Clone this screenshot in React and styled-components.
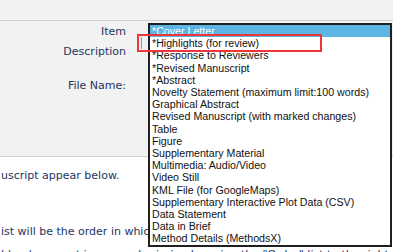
import * as React from 'react'
import styled, { createGlobalStyle } from 'styled-components'

const Global = createGlobalStyle`
  html, body {
    margin: 0;
    padding: 0;
    background: #fff;
    overflow: hidden;
  }
  body {
    width: 393px;
    height: 252px;
  }
`

const Page = styled.div`
  position: relative;
  width: 393px;
  height: 252px;
  overflow: hidden;
  display: flex;
  flex-direction: column;
  font-family: "DejaVu Sans", Verdana, sans-serif;
  color: #1d3562;
`

const TopBar = styled.div`
  height: 20px;
  background: #f2f2f2;
  border-bottom: 1px solid #cfcfcf;
  flex: none;
`

const FormArea = styled.div`
  height: 131px;
  background: #f2f2f2;
  border-bottom: 1px solid #d2d2d2;
  flex: none;
  display: grid;
  grid-template-columns: 126px 1fr;
  align-content: start;
  padding-top: 4px;
`

const Label = styled.div`
  grid-column: 1;
  text-align: right;
  font-size: 11px;
  line-height: 14px;
  margin-top: ${p => p.$gap || 0}px;
  white-space: nowrap;
`

const Body = styled.div`
  flex: 1;
  background: #fff;
  padding-top: 12px;
`

const Line = styled.p`
  margin: ${p => p.$gap || 0}px 0 0 1px;
  font-size: 11px;
  line-height: 14px;
  white-space: nowrap;
`

const ListBox = styled.ul`
  position: absolute;
  left: 148px;
  top: 23px;
  width: 244px;
  height: 224px;
  box-sizing: border-box;
  margin: 0;
  padding: 0;
  list-style: none;
  background: #fff;
  border: 2px solid #1f1f1f;
  font-family: "Liberation Sans", Arial, sans-serif;
  font-size: 10.65px;
  line-height: 12.2px;
  color: #111;
  overflow: hidden;
`

const Option = styled.li`
  padding-left: 2px;
  white-space: nowrap;
  background: ${p => (p.$selected ? '#5cb5e3' : 'transparent')};
  color: ${p => (p.$selected ? '#fff' : '#111')};
`

const Mark = styled.div`
  position: absolute;
  left: 137px;
  top: 34px;
  width: 185px;
  height: 18px;
  box-sizing: border-box;
  border: 2.5px solid #f03538;

  &::before {
    content: '';
    position: absolute;
    left: 2px;
    top: 1px;
    width: 1px;
    height: 12px;
    background: #9a9a9a;
  }
`

const options = [
  '*Cover Letter',
  '*Highlights (for review)',
  '*Response to Reviewers',
  '*Revised Manuscript',
  '*Abstract',
  'Novelty Statement (maximum limit:100 words)',
  'Graphical Abstract',
  'Revised Manuscript (with marked changes)',
  'Table',
  'Figure',
  'Supplementary Material',
  'Multimedia: Audio/Video',
  'Video Still',
  'KML File (for GoogleMaps)',
  'Supplementary Interactive Plot Data (CSV)',
  'Data Statement',
  'Data in Brief',
  'Method Details (MethodsX)',
]

const App = () => {
  return (
    <>
      <Global />
      <Page>
        <TopBar />
        <FormArea>
          <Label>Item</Label>
          <Label $gap={6}>Description</Label>
          <Label $gap={20}>File Name:</Label>
        </FormArea>
        <Body>
          <Line>uscript appear below.</Line>
          <Line $gap={42}>ist will be the order in which they will appear in the PDF:</Line>
          <Line $gap={9}>ld a document in your submission by using the "Order" list to the right and then click</Line>
        </Body>
        <ListBox>
          {options.map((o, i) => (
            <Option key={o} $selected={i === 0}>{o}</Option>
          ))}
        </ListBox>
        <Mark />
      </Page>
    </>
  )
}

export default App
